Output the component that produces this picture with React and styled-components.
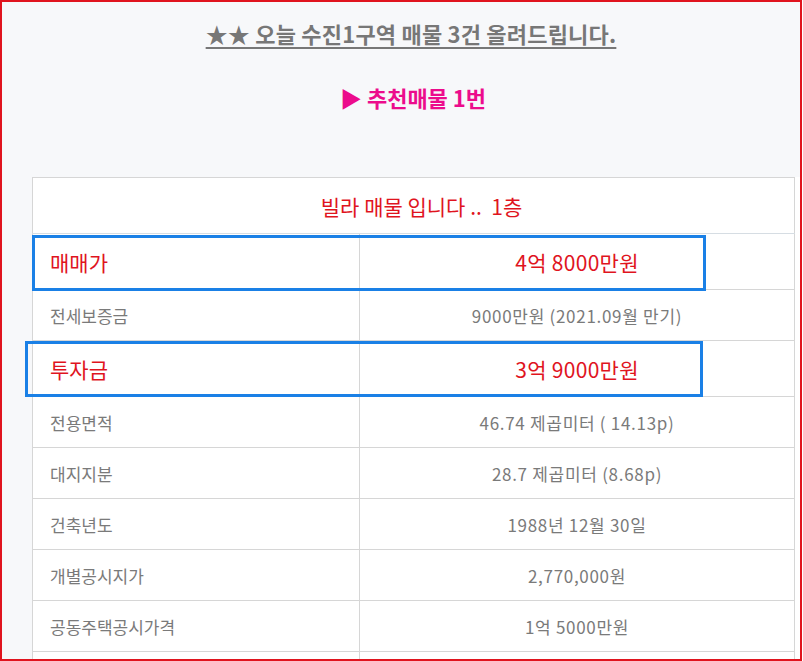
import React from "react";
import styled, { createGlobalStyle } from "styled-components";

const GlobalStyle = createGlobalStyle`
  html, body {
    margin: 0;
    padding: 0;
    background: #ffffff;
  }
  body {
    font-family: "Noto Sans CJK KR", "Noto Sans", sans-serif;
  }
`;

const rows = [
  { label: "매매가", value: "4억 8000만원", strong: true },
  { label: "전세보증금", value: "9000만원 (2021.09월 만기)" },
  { label: "투자금", value: "3억 9000만원", strong: true },
  { label: "전용면적", value: "46.74 제곱미터 ( 14.13p)" },
  { label: "대지지분", value: "28.7 제곱미터 (8.68p)" },
  { label: "건축년도", value: "1988년 12월 30일" },
  { label: "개별공시지가", value: "2,770,000원" },
  { label: "공동주택공시가격", value: "1억 5000만원" },
  { label: "", value: "" },
];

const Post = () => {
  return (
    <>
      <GlobalStyle />
      <Frame>
        <Title>★★ 오늘 수진1구역 매물 3건 올려드립니다.</Title>
        <Pick>▶ 추천매물 1번</Pick>
        <TableArea>
          <InfoTable>
            <colgroup>
              <col style={{ width: 327 }} />
              <col style={{ width: 435 }} />
            </colgroup>
            <tbody>
              <tr>
                <HeadCell colSpan={2}>빌라 매물 입니다 ..&nbsp; 1층</HeadCell>
              </tr>
              {rows.map((r, i) => (
                <Row key={i} $strong={r.strong}>
                  <Label $strong={r.strong}>{r.label}</Label>
                  <Value $strong={r.strong}>{r.value}</Value>
                </Row>
              ))}
            </tbody>
          </InfoTable>
          <Marker $top={58} $left={0} $width={674} />
          <Marker $top={164} $left={-7} $width={678} />
        </TableArea>
      </Frame>
    </>
  );
};

const Frame = styled.div`
  box-sizing: border-box;
  width: 802px;
  height: 661px;
  border: 2px solid #e0141e;
  background: #f7f8fa;
  overflow: hidden;
  padding-top: 16px;
`;

const Title = styled.div`
  text-align: center;
  font-size: 22px;
  line-height: 30px;
  font-weight: 700;
  color: #777777;
  text-decoration: underline;
  text-underline-offset: 4px;
  text-decoration-thickness: 2px;
  letter-spacing: 0.2px;
  padding-left: 20px;
`;

const Pick = styled.div`
  margin-top: 34px;
  text-align: center;
  font-size: 22px;
  line-height: 30px;
  font-weight: 700;
  color: #ec0c8c;
  padding-left: 24px;
`;

const TableArea = styled.div`
  position: relative;
  margin-top: 65px;
  margin-left: 30px;
  background: #ffffff;
`;

const InfoTable = styled.table`
  width: 763px;
  table-layout: fixed;
  border-collapse: collapse;
  border: 1px solid #d6d6d6;
`;

const HeadCell = styled.td`
  height: 55px;
  padding: 0 0 0 16px;
  text-align: center;
  font-size: 21px;
  color: #e0141e;
  border-bottom: 1px solid #d6dde3;
`;

const Row = styled.tr`
  height: ${(p) => (p.$strong ? "56px" : "51px")};
  border-top: 1px solid #d6d6d6;
`;

const Label = styled.td`
  padding: 0 0 0 17px;
  border-right: 1px solid #d6d6d6;
  font-size: ${(p) => (p.$strong ? "21px" : "17px")};
  color: ${(p) => (p.$strong ? "#e0141e" : "#7a7a7a")};
`;

const Value = styled.td`
  padding: 0;
  text-align: center;
  font-size: ${(p) => (p.$strong ? "21px" : "17px")};
  letter-spacing: ${(p) => (p.$strong ? "0.3px" : "0.7px")};
  color: ${(p) => (p.$strong ? "#e0141e" : "#7a7a7a")};
`;

const Marker = styled.div`
  position: absolute;
  top: ${(p) => p.$top}px;
  left: ${(p) => p.$left}px;
  width: ${(p) => p.$width}px;
  height: 56px;
  box-sizing: border-box;
  border: 3px solid #1a80e6;
  pointer-events: none;
`;

export default Post;
